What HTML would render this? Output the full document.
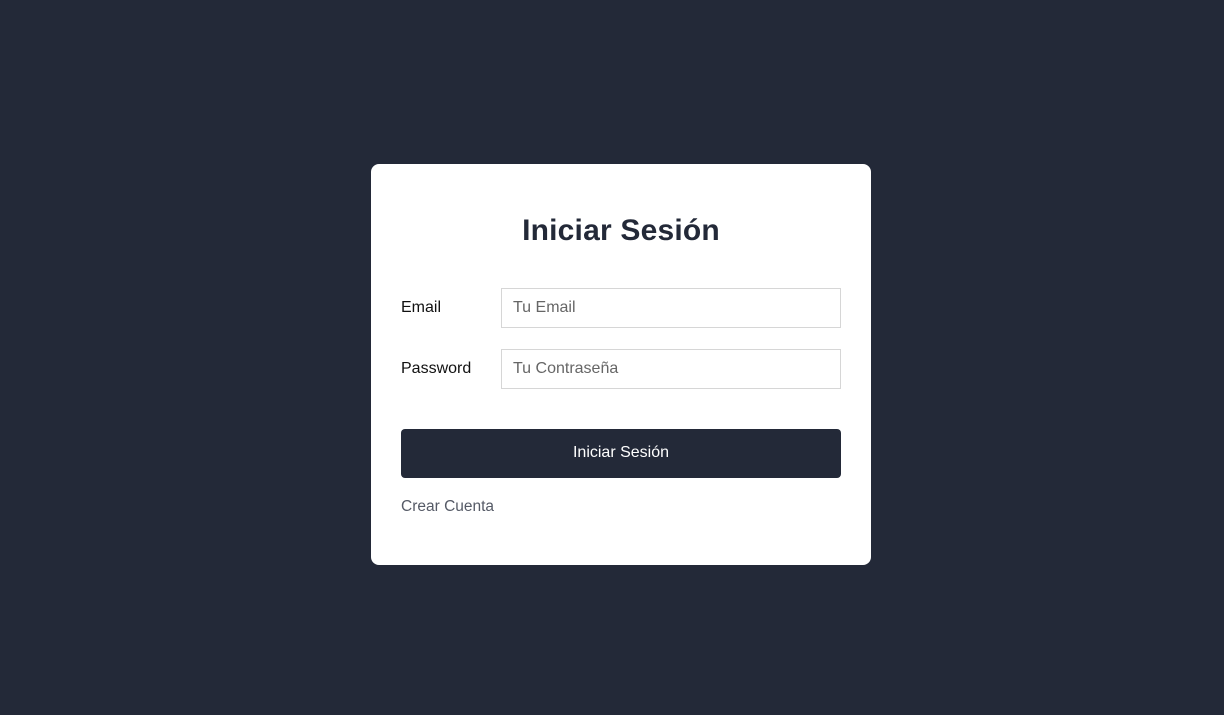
<!DOCTYPE html>
<html><head><meta charset="utf-8"><style>
body{margin:0;width:1224px;height:715px;background:#232938;font-family:"Liberation Sans",sans-serif;position:relative;overflow:hidden}
.card{position:absolute;left:371px;top:164px;width:500px;height:401px;background:#fff;border-radius:8px}
h1{position:absolute;top:214px;left:371px;width:500px;text-align:center;margin:0;font-size:30px;font-weight:900;color:#232938;letter-spacing:0.2px}
.lab{position:absolute;left:401px;font-size:16px;color:#111}
.inp{position:absolute;left:501px;width:338px;height:38px;border:1px solid #d6d6d6;box-sizing:content-box}
.inp span{position:absolute;left:11px;top:10px;font-size:16px;color:#666}
.btn{position:absolute;left:401px;top:429px;width:440px;height:49px;background:#232938;border-radius:4px;color:#fff;font-size:16px;text-align:center;line-height:47px}
.link{position:absolute;left:401px;top:498px;font-size:15.5px;color:#555a66}
</style></head><body>
<div class="card"></div>
<h1>Iniciar Sesión</h1>
<div class="lab" style="top:299px">Email</div>
<div class="inp" style="top:288px"><span>Tu Email</span></div>
<div class="lab" style="top:360px">Password</div>
<div class="inp" style="top:349px"><span>Tu Contraseña</span></div>
<div class="btn">Iniciar Sesión</div>
<div class="link">Crear Cuenta</div>
</body></html>
